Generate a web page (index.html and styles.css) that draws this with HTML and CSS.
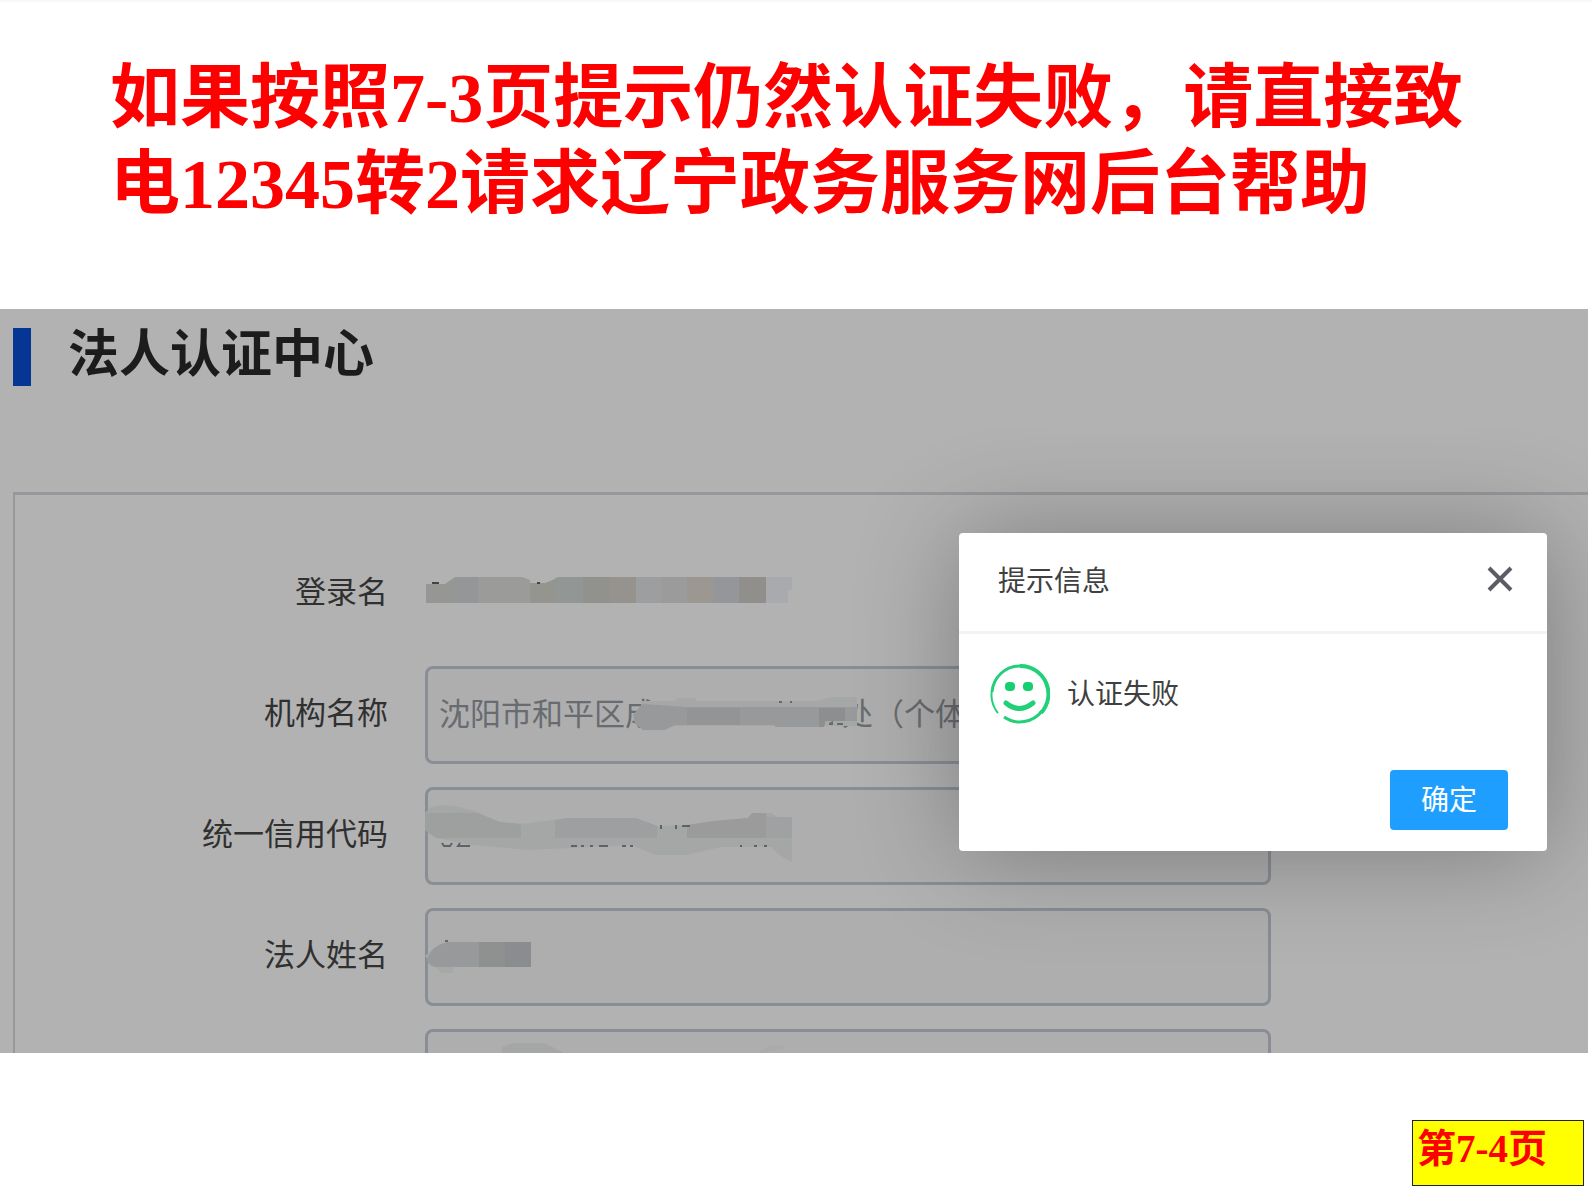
FILE: index.html
```html
<!DOCTYPE html>
<html lang="zh-CN">
<head>
<meta charset="utf-8">
<title>法人认证中心</title>
<link rel="stylesheet" href="styles.css">
</head>
<body>
<div class="slide">
  <h1 class="slide-title">如果按照7-3页提示仍然认证失败，请直接致电12345转2请求辽宁政务服务网后台帮助</h1>

  <main class="capture">
    <header class="section-head">
      <span class="section-bar"></span>
      <h2 class="section-title">法人认证中心</h2>
    </header>

    <form class="panel">
      <div class="row">
        <span class="label">登录名</span>
        <div class="field">
          <svg class="mask" width="372" height="98" viewBox="0 0 372 98" aria-hidden="true">
            <path fill="#969695" d="M1 39H20L30 32H54V58H1z"/>
            <path fill="#949698" d="M28 34L34 32H54V58H28z"/>
            <path fill="#9b9b9a" d="M53 32H97L105 35V58H53z"/>
            <path fill="#959590" d="M105 38H120L130 34V58H105z"/>
            <path fill="#929694" d="M130 33L134 32H158V58H130z"/>
            <path fill="#91918d" d="M158 32H185V58H158z"/>
            <path fill="#96938f" d="M185 32H211V58H185z"/>
            <path fill="#9c9ea0" d="M211 32H237V58H211z"/>
            <path fill="#9b9b9b" d="M237 32H262V58H237z"/>
            <path fill="#9d9792" d="M262 32H288V58H262z"/>
            <path fill="#949699" d="M288 32H314V58H288z"/>
            <path fill="#918f8c" d="M314 32H341V58H314z"/>
            <path fill="#a8aaad" d="M341 32H367V45H363V58H341z"/>
            <path fill="#444" d="M7 37h7v2H7zM112 37h3v2h-3z"/>
          </svg>
        </div>
      </div>
      <div class="row">
        <label class="label" for="org">机构名称</label>
        <div class="field">
          <input class="input" id="org" type="text" value="沈阳市和平区成　　　　　　处（个体）">
          <svg class="mask" width="440" height="98" viewBox="0 0 440 98" aria-hidden="true">
            <path fill="#a6a8a8" d="M216 35H250L253 32H271V35H390L408 31H432V60H216z"/>
            <path fill="#98999a" d="M208 49L217 38L262 41H432V55H401L399 61H350V59H250L240 64H218L210 58z"/>
            <path fill="#939495" d="M262 42H315V59H262z"/>
            <path fill="#8d8e8f" d="M394 42H420V55H400L399 61H394z"/>
            <path fill="#66696d" d="M354 35h3v2h-3zM365 35h2v2h-2zM404 57l4-2v4h-4zM412 57h6v2H412z"/>
          </svg>
        </div>
      </div>
      <div class="row">
        <label class="label" for="code">统一信用代码</label>
        <div class="field">
          <input class="input" id="code" type="text">
          <svg class="mask" width="372" height="98" viewBox="0 0 372 98" aria-hidden="true">
            <path fill="#a5a7a7" d="M0 26L6 20L18 18L30 19L52 25L75 35L96 37L143 31H211L232 39L261 38L289 34L323 31L327 26H346L354 31H367V75L357 70L346 60H296L261 68H230L207 58L104 63L46 58L11 51L0 43z"/>
            <path fill="#9e9f9f" d="M0 26H52L75 35L96 37V51H11L0 43z"/>
            <path fill="#9d9fa0" d="M130 33L143 31H211L232 39V51H130z"/>
            <path fill="#9b9b9b" d="M262 38L289 34L323 31L327 26H341V51H262z"/>
            <path fill="#9fa1a3" d="M341 30H367V51H341z"/>
            <path fill="none" stroke="#5f6368" stroke-width="2" d="M17 56L19 59H25L27 56M35 56L33 59H45M146 59h6M156 59h3M165 59h3M174 59h9M197 59h4M205 59h3M315 59h2M329 59h3M339 59h3M236 38v4M251 38v4M257 39h8"/>
          </svg>
        </div>
      </div>
      <div class="row">
        <label class="label" for="person">法人姓名</label>
        <div class="field">
          <input class="input" id="person" type="text">
          <svg class="mask" width="372" height="98" viewBox="0 0 372 98" aria-hidden="true">
            <path fill="#a7a9a9" d="M0 48L10 40H40V58H28V65H16z"/>
            <path fill="#98999a" d="M2 52Q6 38 22 34H54V59H10Q4 58 2 52z"/>
            <path fill="#8f9090" d="M54 34H80V59H54z"/>
            <path fill="#8b8c90" d="M80 34H106V59H80z"/>
            <path fill="#666" d="M20 32h3v2h-3z"/>
          </svg>
        </div>
      </div>
      <div class="row">
        <label class="label" for="idno"></label>
        <div class="field">
          <input class="input" id="idno" type="text" aria-label="证件号码">
          <svg class="mask" width="372" height="98" viewBox="0 0 372 98" aria-hidden="true">
            <path fill="#a5a7a6" d="M77 18L88 14H120L139 24H77z"/>
            <path fill="#aaabab" d="M332 24L345 16H360V19L340 24z"/>
          </svg>
        </div>
      </div>
    </form>

    <section class="dialog" role="dialog" aria-labelledby="dialog-title">
      <header class="dialog-head">
        <h3 class="dialog-title" id="dialog-title">提示信息</h3>
        <button class="close" type="button" aria-label="关闭">
          <svg width="26" height="26" viewBox="0 0 26 26" aria-hidden="true">
            <path d="M2 2L24 24M24 2L2 24" fill="none" stroke="#5c5c66" stroke-width="4"/>
          </svg>
        </button>
      </header>
      <div class="dialog-body">
        <svg width="60" height="60" viewBox="0 0 60 60" aria-hidden="true">
          <g fill="none" stroke="#23d07a">
            <path d="M8 49A28 28 0 0 1 3 22" stroke-width="2"/>
            <path d="M2 28A28 28 0 0 1 30 2" stroke-width="3"/>
            <path d="M30 2A28 28 0 0 1 51 49" stroke-width="4"/>
            <path d="M52 47A28 28 0 0 1 14 53" stroke-width="3"/>
            <path d="M16 39Q29 50 43 39" stroke-width="5" stroke-linecap="round"/>
          </g>
          <rect x="15" y="18" width="10" height="9" rx="4" fill="#16cf70"/>
          <rect x="33" y="18" width="10" height="9" rx="4" fill="#16cf70"/>
        </svg>
        <p class="message">认证失败</p>
      </div>
      <footer class="dialog-foot">
        <button class="confirm" type="button">确定</button>
      </footer>
    </section>
  </main>

  <footer class="slide-foot">
    <p class="page-tag">第7-4页</p>
  </footer>
</div>
</body>
</html>
```

FILE: styles.css
```css
* {
  box-sizing: border-box;
}

body {
  margin: 0;
  background: #fff;
  font-family: "Noto Sans CJK SC", sans-serif;
}

h1, h2, h3, p {
  margin: 0;
}

.slide {
  display: grid;
  grid-template-rows: auto minmax(0, 1fr) auto;
  height: 100vh;
  border-top: 2px solid #f7f7f7;
}

.slide-title {
  padding: 54px 110px 81px;
  color: #f00;
  font: bold 70px/86px "Liberation Serif", "Noto Sans CJK SC", serif;
}

.capture {
  position: relative;
  margin-right: 4px;
  padding: 19px 0 0 13px;
  overflow: hidden;
  background: #b2b2b2;
}

.section-head {
  display: flex;
  gap: 37px;
  height: 58px;
}

.section-bar {
  width: 18px;
  background: #063693;
}

.section-title {
  color: #1c1c1c;
  font-size: 51px;
  line-height: 44px;
  font-weight: 700;
}

.panel {
  display: flex;
  flex-direction: column;
  gap: 23px;
  margin-top: 106px;
  padding-top: 50px;
  border: solid #98989c;
  border-width: 3px 0 0 2px;
}

.row {
  display: grid;
  grid-template-columns: 373px minmax(0, 846px);
  gap: 37px;
  align-items: center;
  height: 98px;
}

.label {
  padding-bottom: 8px;
  color: #303030;
  font-size: 31px;
  line-height: 40px;
  text-align: right;
}

.field {
  position: relative;
  height: 98px;
}

.input {
  width: 100%;
  height: 98px;
  padding: 0 11px 8px;
  border: 3px solid #898e96;
  border-radius: 8px;
  background: #aeaeae;
  color: #686b70;
  font-family: inherit;
  font-size: 31px;
}

.mask {
  position: absolute;
  top: 0;
  left: 0;
}

.dialog {
  position: absolute;
  top: 224px;
  right: 41px;
  width: 588px;
  border-radius: 4px;
  background: #fff;
  box-shadow: 2px 2px 105px rgba(0, 0, 0, 0.3);
}

.dialog-head {
  display: flex;
  align-items: center;
  justify-content: space-between;
  height: 101px;
  padding: 0 34px 6px 39px;
  border-bottom: 3px solid #f3f3f3;
}

.dialog-title,
.message,
.confirm {
  font-size: 28px;
  line-height: 40px;
  font-weight: 400;
}

.dialog-title,
.message {
  color: #404040;
}

.close {
  display: flex;
  padding: 0;
  border: 0;
  background: none;
}

.dialog-body {
  display: flex;
  gap: 17px;
  padding: 30px 31px 46px;
}

.message {
  padding-top: 8px;
}

.dialog-foot {
  display: flex;
  justify-content: flex-end;
  padding: 0 39px 21px;
}

.confirm {
  width: 118px;
  height: 60px;
  padding: 0 0 4px;
  border: 0;
  border-radius: 4px;
  background: #1e9fff;
  color: #fff;
  font-family: inherit;
}

.slide-foot {
  display: flex;
  justify-content: flex-end;
  padding: 67px 8px 5px;
}

.page-tag {
  width: 172px;
  padding: 4px 4px 12px;
  border: 1px solid #222;
  background: #ff0;
  color: #f00;
  font: bold 39px/48px "Liberation Serif", "Noto Sans CJK SC", serif;
}
```
